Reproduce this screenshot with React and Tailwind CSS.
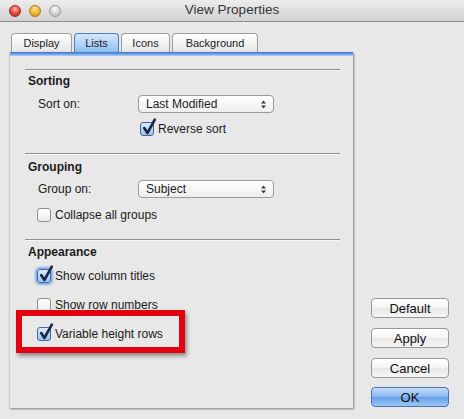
import React from 'react';

// little mac-style checkbox
const Check = ({ checked, focused }) => (
  <span
    className={`relative inline-block h-[14px] w-[14px] shrink-0 rounded-[3px] border ${
      checked
        ? 'border-[#44649a] bg-[linear-gradient(#dcebfc,#9cc3f2)]'
        : 'border-[#8f8f8f] bg-[linear-gradient(#ffffff,#ececec)]'
    } ${focused ? 'shadow-[0_0_2px_2px_#80b1ef]' : ''}`}
  >
    {checked && (
      <svg
        className="absolute -top-[5px] left-[1px] overflow-visible"
        width="14"
        height="17"
        viewBox="0 0 14 17"
      >
        <path
          d="M2.2 10 L5.4 15 L12.8 1.6"
          fill="none"
          stroke="#172846"
          strokeWidth="2.6"
          strokeLinecap="round"
          strokeLinejoin="round"
        />
      </svg>
    )}
  </span>
);

const Select = ({ value }) => (
  <div className="flex h-[18px] w-[136px] items-center justify-between rounded-[4px] border border-[#9a9a9a] bg-[linear-gradient(#ffffff,#eeeeee)] pr-[7px] pl-[7px] text-[12px]">
    <span>{value}</span>
    <svg width="5" height="9" viewBox="0 0 5 9">
      <path d="M0 3.6 L2.5 0.4 L5 3.6Z M0 5.4 L2.5 8.6 L5 5.4Z" fill="#3a3a3a" />
    </svg>
  </div>
);

const Btn = ({ children, primary }) => (
  <button
    className={`h-[20px] w-[78px] rounded-[4px] border text-[13px] leading-none text-[#111] ${
      primary
        ? 'border-[#4b72ab] bg-[linear-gradient(#c3ddf9,#86b6f0_50%,#679fe9_51%,#9cc8f6)]'
        : 'border-[#979797] bg-[linear-gradient(#ffffff,#f4f4f4_50%,#e8e8e8_51%,#f6f6f6)]'
    }`}
  >
    {children}
  </button>
);

const Line = ({ className }) => (
  <div className={`mr-[13px] ml-[15px] border-t border-b border-t-[#8e8e8e] border-b-[#f7f7f7] ${className}`} />
);

const tabs = [
  { name: 'Display', w: 'w-[61px]' },
  { name: 'Lists', w: 'w-[45px]', active: true },
  { name: 'Icons', w: 'w-[49px]' },
  { name: 'Background', w: 'w-[86px]' },
];

export default function App() {
  return (
    <div className="h-[419px] w-[464px] overflow-hidden bg-[#e8e8e8] font-['Liberation_Sans',Arial,sans-serif] text-[12px] text-[#1b1b1b]">
      {/* Title bar */}
      <div className="flex h-[22px] items-center border-b border-[#8f8f8f] bg-[linear-gradient(#ececec,#d2d2d2)]">
        <div className="flex w-[70px] items-center gap-[8px] pl-[9px]">
          <span className="h-[12px] w-[12px] rounded-full border border-[#a5241d] bg-[radial-gradient(circle_at_50%_30%,#ffb1a9,#e5453b_55%,#b5211a)]" />
          <span className="h-[12px] w-[12px] rounded-full border border-[#b07a14] bg-[radial-gradient(circle_at_50%_30%,#ffe6a0,#f1b42c_55%,#c98a12)]" />
          <span className="h-[12px] w-[12px] rounded-full border border-[#9a9a9a] bg-[radial-gradient(circle_at_50%_30%,#fafafa,#d3d3d3_55%,#b3b3b3)]" />
        </div>
        <div className="flex-1 text-center text-[13.5px] text-[#353535]">View Properties</div>
        <div className="w-[70px]" />
      </div>

      <div className="flex h-[397px]">
        <div className="mt-[11px] ml-[9px] flex flex-col">
          {/* Tabs */}
          <div className="flex h-[19px] gap-[2px] pl-[2px]">
            {tabs.map((t) => (
              <div
                key={t.name}
                className={`flex h-[19px] items-center justify-center rounded-t-[4px] border border-b-0 text-[11px] ${t.w} ${
                  t.active
                    ? 'border-[#4f7fc3] bg-[linear-gradient(#d6e8fc,#8fc0f4)]'
                    : 'border-[#9c9c9c] bg-[linear-gradient(#ffffff,#e6e6e6)]'
                }`}
              >
                {t.name}
              </div>
            ))}
          </div>

          {/* Panel */}
          <div className="relative flex h-[356px] w-[344px] flex-col border-l border-[#cfcfcf] bg-[#e8e8e8] shadow-[1px_1px_2px_rgba(0,0,0,0.45)]">
            <div className="h-[4px] bg-[linear-gradient(#3f78cc,#5f96e0_40%,#b5d3f6)]" />

            <Line className="mt-[13px]" />
            <div className="flex h-[20px] items-center pl-[18px] font-bold">Sorting</div>
            <div className="mt-[4px] flex h-[18px] items-center pl-[28px]">
              <span className="w-[100px]">Sort on:</span>
              <Select value="Last Modified" />
            </div>
            <div className="mt-[9px] flex h-[14px] items-center gap-[4px] pl-[130px]">
              <Check checked />
              <span>Reverse sort</span>
            </div>

            <Line className="mt-[17px]" />
            <div className="flex h-[24px] items-center pl-[18px] font-bold">Grouping</div>
            <div className="mt-[1px] flex h-[18px] items-center pl-[28px]">
              <span className="w-[100px]">Group on:</span>
              <Select value="Subject" />
            </div>
            <div className="mt-[10px] flex h-[14px] items-center gap-[4px] pl-[27px]">
              <Check />
              <span>Collapse all groups</span>
            </div>

            <Line className="mt-[17px]" />
            <div className="flex h-[22px] items-center pl-[18px] font-bold">Appearance</div>
            <div className="mt-[5px] flex h-[16px] items-center gap-[4px] pl-[27px]">
              <Check checked focused />
              <span>Show column titles</span>
            </div>
            <div className="mt-[14px] flex h-[14px] items-center gap-[4px] pl-[27px]">
              <Check />
              <span>Show row numbers</span>
            </div>
            <div className="mt-[15px] flex h-[14px] items-center gap-[4px] pl-[27px]">
              <Check checked />
              <span>Variable height rows</span>
            </div>

            {/* red annotation box */}
            <div className="absolute top-[258px] left-[6px] h-[43px] w-[169px] border-[6px] border-[#e3000f] shadow-[2px_3px_4px_rgba(0,0,0,0.4)]" />
          </div>
        </div>

        {/* Buttons */}
        <div className="mb-[12px] ml-[18px] flex w-[78px] flex-col gap-[10px] self-end">
          <Btn>Default</Btn>
          <Btn>Apply</Btn>
          <Btn>Cancel</Btn>
          <div className="-mt-[1px]">
            <Btn primary>OK</Btn>
          </div>
        </div>
      </div>
    </div>
  );
}
